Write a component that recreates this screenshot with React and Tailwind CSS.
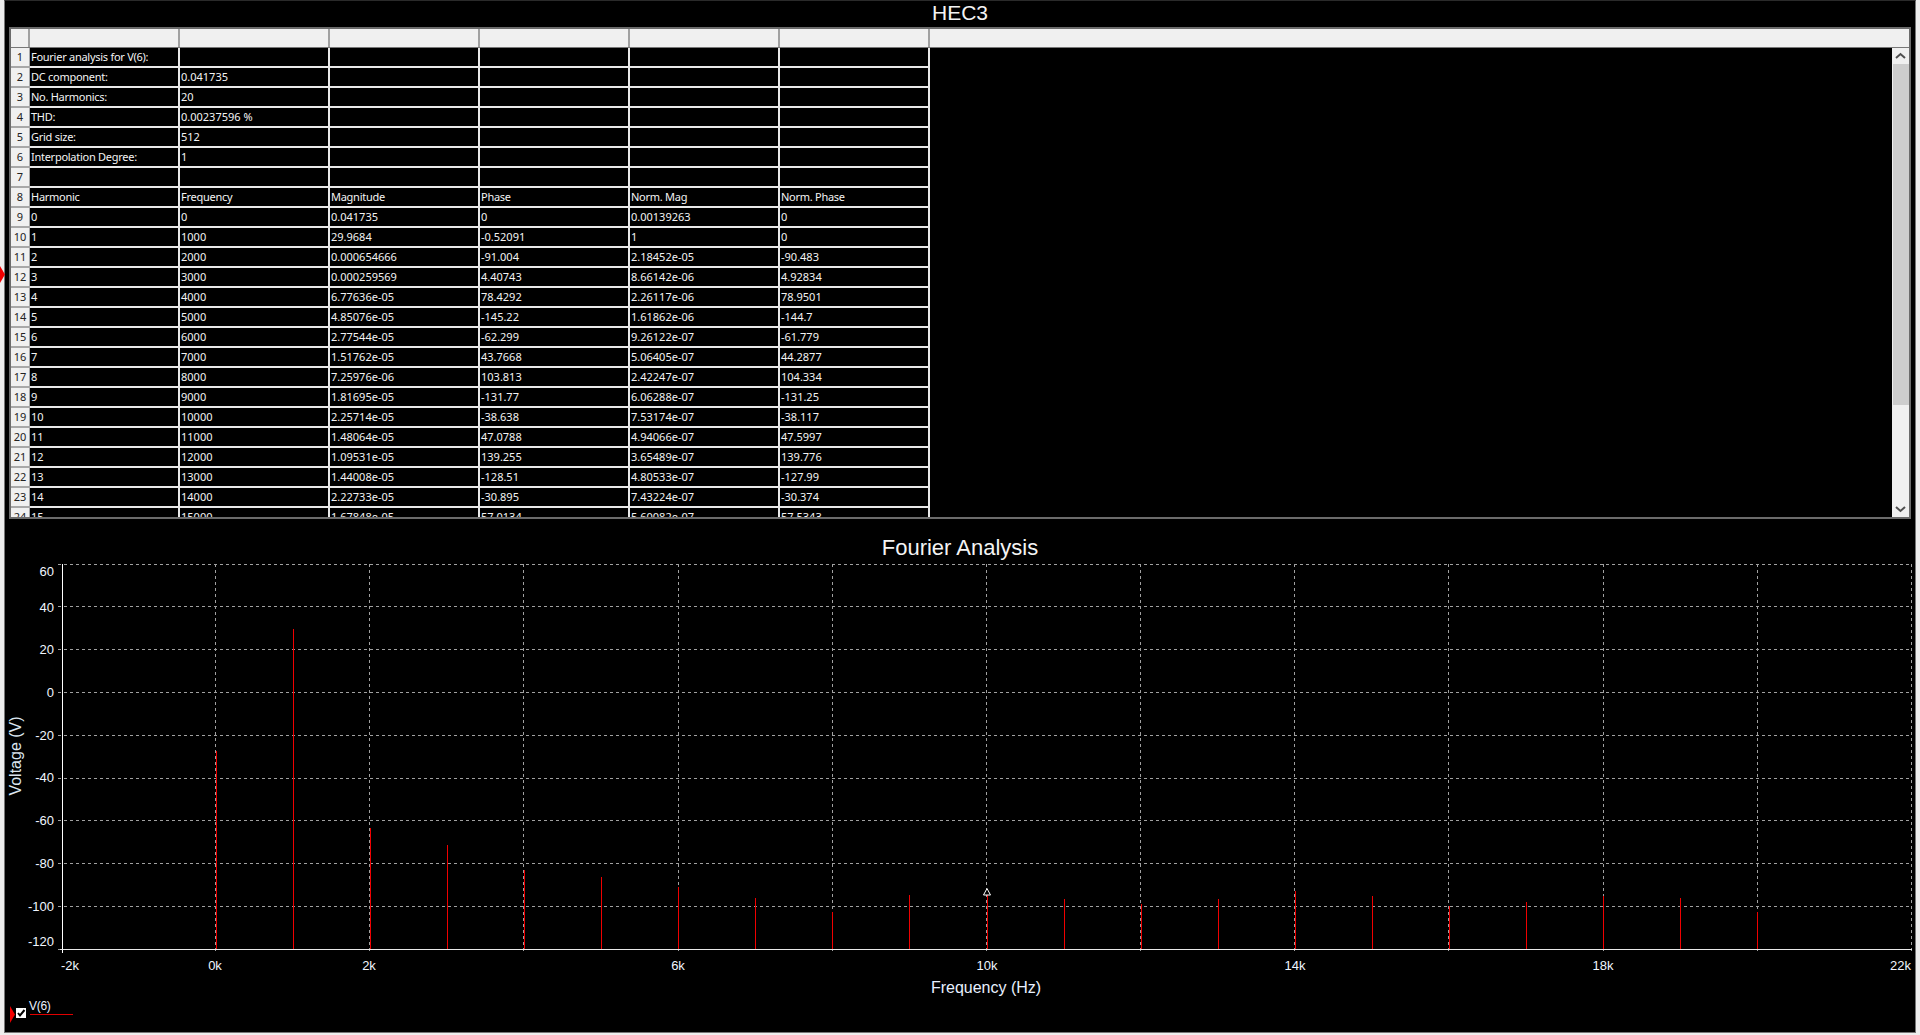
import React from 'react';

const summary = [
    ['Fourier analysis for V(6):', ''],
    ['DC component:', '0.041735'],
    ['No. Harmonics:', '20'],
    ['THD:', '0.00237596 %'],
    ['Grid size:', '512'],
    ['Interpolation Degree:', '1'],
    ['', ''],
];

const harmonics = [
    ['Harmonic', 'Frequency', 'Magnitude', 'Phase', 'Norm. Mag', 'Norm. Phase'],
    ['0', '0', '0.041735', '0', '0.00139263', '0'],
    ['1', '1000', '29.9684', '-0.52091', '1', '0'],
    ['2', '2000', '0.000654666', '-91.004', '2.18452e-05', '-90.483'],
    ['3', '3000', '0.000259569', '4.40743', '8.66142e-06', '4.92834'],
    ['4', '4000', '6.77636e-05', '78.4292', '2.26117e-06', '78.9501'],
    ['5', '5000', '4.85076e-05', '-145.22', '1.61862e-06', '-144.7'],
    ['6', '6000', '2.77544e-05', '-62.299', '9.26122e-07', '-61.779'],
    ['7', '7000', '1.51762e-05', '43.7668', '5.06405e-07', '44.2877'],
    ['8', '8000', '7.25976e-06', '103.813', '2.42247e-07', '104.334'],
    ['9', '9000', '1.81695e-05', '-131.77', '6.06288e-07', '-131.25'],
    ['10', '10000', '2.25714e-05', '-38.638', '7.53174e-07', '-38.117'],
    ['11', '11000', '1.48064e-05', '47.0788', '4.94066e-07', '47.5997'],
    ['12', '12000', '1.09531e-05', '139.255', '3.65489e-07', '139.776'],
    ['13', '13000', '1.44008e-05', '-128.51', '4.80533e-07', '-127.99'],
    ['14', '14000', '2.22733e-05', '-30.895', '7.43224e-07', '-30.374'],
    ['15', '15000', '1.67848e-05', '57.0134', '5.60082e-07', '57.5343'],
];

const rows = [...summary.map(([a, b]) => [a, b, '', '', '', '']), ...harmonics];

// top of each stem, harmonic 0 to 20
const stemTops = [751, 629, 828, 845, 870, 877, 887, 898, 912, 895, 892, 899, 904, 899, 891, 896, 906, 902, 896, 898, 912];

const gridXs = [215, 369, 523, 678, 832, 986, 1140, 1294, 1448, 1603, 1757, 1911];
const stemX = (k) => Math.floor(216.5 + 77.05 * k) + 0.5;
const yAt = (volts) => Math.round(692 - volts * 2.139);

const yLabels = [
    [60, 576], [40, 612], [20, 654], [0, 697], [-20, 740], [-40, 782], [-60, 825],
    [-80, 868], [-100, 911], [-120, 946],
];
const xLabels = [
    ['-2k', 70, 'middle'], ['0k', 215, 'middle'], ['2k', 369, 'middle'], ['6k', 678, 'middle'],
    ['10k', 987, 'middle'], ['14k', 1295, 'middle'], ['18k', 1603, 'middle'], ['22k', 1911, 'end'],
];

const ScrollArrow = ({ points }) => (
    <svg className="w-[17px] h-[16px] shrink-0" viewBox="0 0 17 16">
        <polyline points={points} fill="none" stroke="#505050" strokeWidth="2" />
    </svg>
);

const Grid = () => (
    <div className="ml-[4px] w-[1902px] h-[492px] border-2 border-[#6b6b6b] bg-black flex flex-col shrink-0 text-[11px] leading-[17px] font-['Noto_Sans',sans-serif]">
        {/* Column headers */}
        <div className="flex h-[19px] shrink-0 bg-[#f0f0f0] border-b border-[#777]">
            <div className="w-[19px] border-r-2 border-[#a0a0a0]" />
            {[0, 1, 2, 3, 4, 5].map((i) => (
                <div key={i} className="w-[150px] border-r-2 border-[#a0a0a0]" />
            ))}
        </div>

        <div className="flex flex-1 min-h-0">
            {/* Cells */}
            <div className="flex-1 overflow-hidden">
                {rows.map((row, r) => (
                    <div key={r} className="flex h-[20px]">
                        <div className="w-[19px] bg-[#f0f0f0] border-r border-b-2 border-[#a8a8a8] text-center text-[#222]">
                            {r + 1}
                        </div>
                        {row.map((cell, c) => (
                            <div
                                key={c}
                                className={/[a-z]{3}/i.test(cell)
                                    ? 'w-[150px] pl-px border-r-2 border-b-2 border-[#e8e8e8] text-[#f4f4f4] whitespace-nowrap tracking-[-0.27px]'
                                    : 'w-[150px] pl-px border-r-2 border-b-2 border-[#e8e8e8] text-[#f4f4f4] whitespace-nowrap'}
                            >
                                {cell}
                            </div>
                        ))}
                    </div>
                ))}
            </div>

            {/* Scrollbar */}
            <div className="w-[17px] flex flex-col bg-[#f0f0f0] shrink-0">
                <ScrollArrow points="4,10 8.5,6 13,10" />
                <div className="h-[341px] ml-[1px] bg-[#cdcdcd]" />
                <div className="flex-1" />
                <ScrollArrow points="4,6 8.5,10 13,6" />
            </div>
        </div>
    </div>
);

const Chart = () => (
    <svg className="block w-[1910px] h-[440px] shrink-0 font-['Liberation_Sans',sans-serif]" viewBox="5 560 1910 440">
        {/* Grid */}
        {yLabels.map(([v]) => (
            <line key={v} x1="58" x2="1911" y1={yAt(v) + 0.5} y2={yAt(v) + 0.5} stroke="#a0a0a0" strokeDasharray="3 3" />
        ))}
        {gridXs.map((x) => (
            <line key={x} x1={x + 0.5} x2={x + 0.5} y1="564" y2="953" stroke="#a0a0a0" strokeDasharray="3 3" />
        ))}

        {/* Stems */}
        {stemTops.map((top, k) => (
            <line key={k} x1={stemX(k)} x2={stemX(k)} y1={top} y2="949" stroke="#f00000" />
        ))}

        {/* Axes */}
        <line x1="62.5" x2="62.5" y1="564" y2="953" stroke="#fff" />
        <line x1="60" x2="1912" y1="949.5" y2="949.5" stroke="#e8e8e8" />

        {/* Cursor marker */}
        <polygon points="987,888.5 990.5,895 983.5,895" fill="#000" stroke="#fff" />

        {yLabels.map(([v, y]) => (
            <text key={v} x="54" y={y} textAnchor="end" fontSize="13" fill="#f0f6ff">{v}</text>
        ))}
        {xLabels.map(([label, x, anchor]) => (
            <text key={label} x={x} y="970" textAnchor={anchor} fontSize="13" fill="#f0f6ff">{label}</text>
        ))}

        <text x="986" y="993" textAnchor="middle" fontSize="16" fill="#e8f0ff">Frequency (Hz)</text>
        <text transform="translate(21 756) rotate(-90)" textAnchor="middle" fontSize="16" fill="#dde6f0">Voltage (V)</text>
    </svg>
);

const Legend = () => (
    <div className="flex items-start pl-[5px] font-['Liberation_Sans',sans-serif]">
        <svg className="w-[6px] h-[17px] mt-[6px] shrink-0" viewBox="0 0 6 17">
            <polygon points="0,0 5,8.5 0,17" fill="#f00000" />
        </svg>
        <div className="w-[10px] h-[10px] mt-[8px] bg-white flex items-center justify-center shrink-0">
            <svg className="w-[10px] h-[10px]" viewBox="0 0 10 10">
                <polyline points="2,5 4,7.5 8.5,2" fill="none" stroke="#000" strokeWidth="2" />
            </svg>
        </div>
        <div className="ml-[3px] w-[44px]">
            <div className="h-[14px] leading-[13px] text-[12px] text-[#eaf2ff] -tracking-[0.3px]">V(6)</div>
            <div className="h-px ml-px bg-[#e00000]" />
        </div>
    </div>
);

const App = () => {
    return (
        <div className="w-[1920px] h-[1035px] bg-[#eeeeee] pl-[4px] pr-[4px] pb-[2px] overflow-hidden relative">
            <div className="h-full bg-black border-t border-l border-r border-b border-[#777] border-t-[#2a2a2a] flex flex-col font-['Liberation_Sans',sans-serif]">
                <div className="h-[26px] shrink-0 pb-[4px] flex items-center justify-center text-[21px] leading-none text-[#f4f4f4]">HEC3</div>
                <Grid />
                <div className="h-[41px] shrink-0 flex items-end justify-center text-[22px] leading-[25px] text-[#f4f4f4]">Fourier Analysis</div>
                <Chart />
                <Legend />
            </div>
            {/* Active row marker on the window edge */}
            <svg className="absolute left-0 top-[266px] w-[6px] h-[17px]" viewBox="0 0 6 17">
                <polygon points="0,0 5,8.5 0,17" fill="#f00000" />
            </svg>
        </div>
    );
};

export default App;
